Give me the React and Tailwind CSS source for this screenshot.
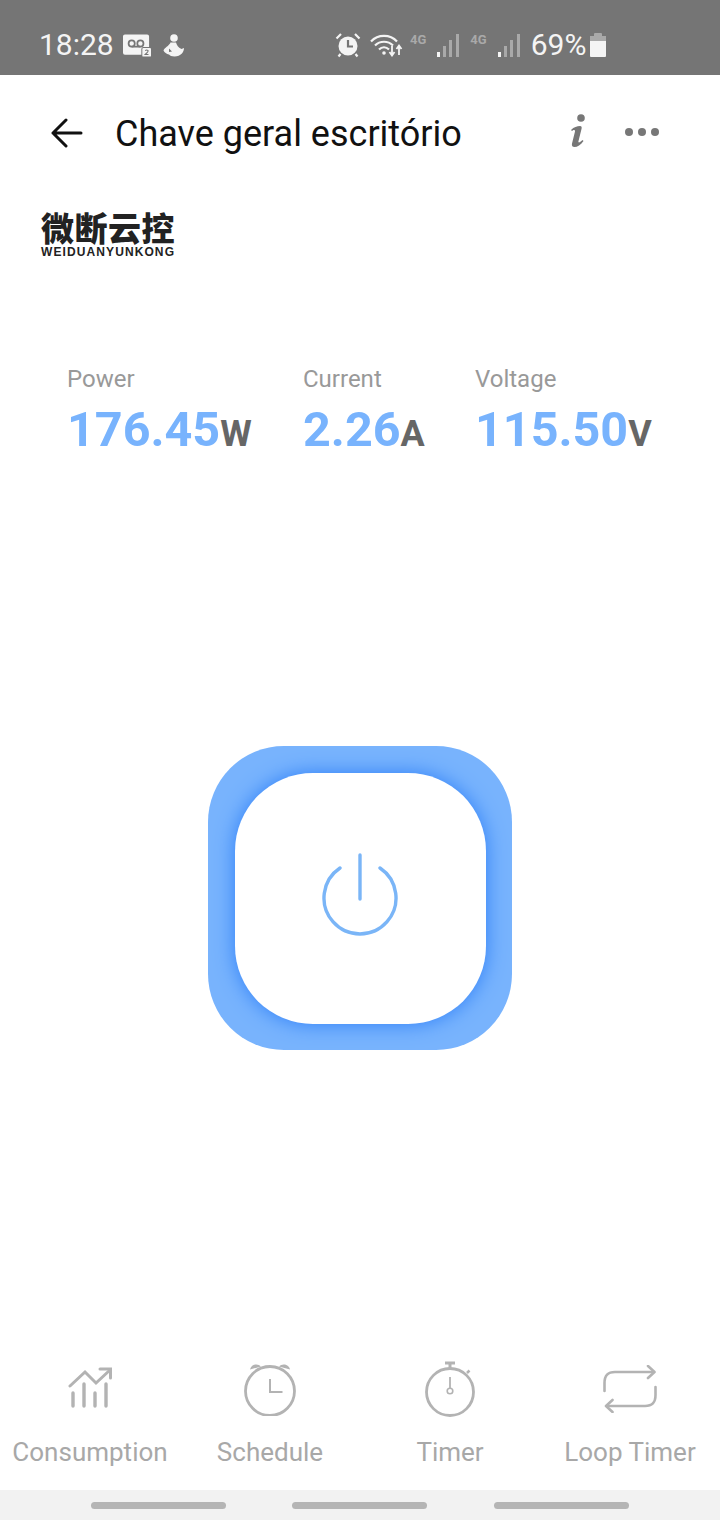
import React from 'react';

const VoicemailIcon = () => (
  <svg width="28" height="23" viewBox="0 0 29 23">
    <path d="M2 0h23a2 2 0 0 1 2 2v11h-6a2 2 0 0 0-2 2v6H2a2 2 0 0 1-2-2V2a2 2 0 0 1 2-2z" fill="#f4f4f4" />
    <circle cx="9" cy="9.500" r="3.200" fill="none" stroke="#757575" strokeWidth="1.800" />
    <circle cx="18" cy="9.500" r="3.200" fill="none" stroke="#757575" strokeWidth="1.800" />
    <path d="M9 12.700h9" stroke="#757575" strokeWidth="1.800" />
    <rect x="20" y="14" width="9" height="9" rx="1" fill="#f4f4f4" />
    <path d="M23 16.800q1.500-1.300 3 0 .3 1-3 4h3.400" fill="none" stroke="#757575" strokeWidth="1.100" />
  </svg>
);

const FigureIcon = () => (
  <svg width="22" height="23" viewBox="0 0 22 23" fill="#f4f4f4">
    <circle cx="11" cy="4" r="3.800" />
    <path d="M8 8.500h5c1 3 2 5 5.500 6.500l2.500-1c0 4-3 8.500-9.500 8.500-3 0-4.500-1-5.500-2-2.500-.5-4.500-2-5.500-4 1-3 5-4 7.500-8.500z" />
    <path d="M6 14.500l3 3-3 .5z" fill="#757575" />
  </svg>
);

const AlarmIcon = () => (
  <svg width="26" height="26" viewBox="0 0 26 26">
    <circle cx="13" cy="14" r="9.500" fill="#f4f4f4" />
    <path d="M13 8v6.500h5" fill="none" stroke="#757575" strokeWidth="2.200" />
    <path d="M1.500 6.500L6 2M24.500 6.500L20 2M5.500 22l-2 2.500M20.500 22l2 2.500" stroke="#f4f4f4" strokeWidth="2.200" />
  </svg>
);

const WifiIcon = () => (
  <svg width="33" height="24" viewBox="0 0 33 24" fill="none">
    <path d="M1 8.500C8 1 20 1 27 8.500" stroke="#f4f4f4" strokeWidth="2.200" />
    <path d="M5 12.500C10 7.500 18 7.500 23 12.500" stroke="#f4f4f4" strokeWidth="2.200" />
    <path d="M9 16.500c3-3 7-3 10 0" stroke="#f4f4f4" strokeWidth="2.200" />
    <circle cx="14" cy="20" r="1.800" fill="#f4f4f4" />
    <path d="M22 13v9M19.500 19l2.500 3.500 2.500-3.500" stroke="#f4f4f4" strokeWidth="1.800" />
    <path d="M29 22v-9M26.500 16l2.500-3.500 2.500 3.500" stroke="#f4f4f4" strokeWidth="1.800" />
  </svg>
);

const SignalIcon = () => (
  <svg width="22" height="24" viewBox="0 0 22 24">
    <rect x="0" y="19" width="3" height="5" fill="#f4f4f4" />
    <rect x="6" y="13" width="3" height="11" fill="#a9a9a9" />
    <rect x="12" y="7" width="3" height="17" fill="#a9a9a9" />
    <rect x="19" y="1" width="3" height="23" fill="#a9a9a9" />
  </svg>
);

const ConsumptionIcon = () => (
  <svg width="44" height="44" viewBox="0 0 44 44" fill="none" stroke="#b3b3b3" strokeWidth="3" strokeLinecap="round">
    <path d="M2 19L17 5l11 11L42 3" />
    <path d="M32 2h10.500v9" />
    <path d="M5 26v13M16 17v22M27 26v13M38 17v22" strokeWidth="3.400" />
  </svg>
);

const ScheduleIcon = () => (
  <svg width="54" height="54" viewBox="0 0 54 54" fill="none">
    <circle cx="27" cy="29" r="24.500" stroke="#b3b3b3" strokeWidth="2.800" />
    <path d="M7 7.500C8 2 15 1 18 4.500zM47 7.500C46 2 39 1 36 4.500z" fill="#b3b3b3" />
    <path d="M27 17v13h12.500" stroke="#b3b3b3" strokeWidth="2" />
  </svg>
);

const TimerIcon = () => (
  <svg width="52" height="56" viewBox="0 0 52 56" fill="none" stroke="#b3b3b3">
    <circle cx="26" cy="31" r="23.500" strokeWidth="2.800" />
    <path d="M21 2h10M26 2v5" strokeWidth="3" />
    <path d="M43 12l2.500-2.500" strokeWidth="2.500" />
    <path d="M26 16v11" strokeWidth="1.800" />
    <circle cx="26" cy="30" r="2.800" strokeWidth="1.600" />
  </svg>
);

const LoopIcon = () => (
  <svg width="54" height="48" viewBox="0 0 54 48" fill="none" stroke="#b3b3b3" strokeWidth="2.600" strokeLinecap="round" strokeLinejoin="round">
    <path d="M1.500 26v-8C1.500 10 5 7 12 7h38" />
    <path d="M45 1l6.500 6-6.500 6" />
    <path d="M52.500 22v8c0 8-3.500 11-10.500 11H4" />
    <path d="M9.500 35L3 41l6.500 6" />
  </svg>
);

const PowerIcon = () => (
  <svg width="76" height="84" viewBox="0 0 76 84" fill="none" stroke="#7ab5f7" strokeWidth="3.400" strokeLinecap="round" className="mb-[6px]">
    <path d="M38 2v44" />
    <path d="M18 15a36 36 0 1 0 40 0" />
  </svg>
);

const tabs = [
  { label: 'Consumption', icon: <ConsumptionIcon /> },
  { label: 'Schedule', icon: <ScheduleIcon /> },
  { label: 'Timer', icon: <TimerIcon /> },
  { label: 'Loop Timer', icon: <LoopIcon /> },
];

const stats = [
  { label: 'Power', value: '176.45', unit: 'W', width: 'w-[236px]' },
  { label: 'Current', value: '2.26', unit: 'A', width: 'w-[172px]' },
  { label: 'Voltage', value: '115.50', unit: 'V', width: 'w-[200px]' },
];

export default function App() {
  return (
    <div className="w-[720px] h-[1520px] flex flex-col bg-white overflow-hidden font-['Roboto',sans-serif]">
      {/* status bar */}
      <div className="h-[75px] shrink-0 bg-[#757575] flex items-center pl-[39px] pt-[15px] text-[#f4f4f4]">
        <span className="text-[30px] leading-none w-[84px]">18:28</span>
        <VoicemailIcon />
        <span className="ml-[12px] flex"><FigureIcon /></span>
        <span className="ml-[150px] flex"><AlarmIcon /></span>
        <span className="ml-[9px] flex"><WifiIcon /></span>
        <span className="ml-[7px] mb-3 text-[13px] font-bold text-[#a9a9a9] leading-none">4G</span>
        <span className="ml-[11px] flex"><SignalIcon /></span>
        <span className="ml-[11px] mb-3 text-[13px] font-bold text-[#a9a9a9] leading-none">4G</span>
        <span className="ml-[11px] flex"><SignalIcon /></span>
        <span className="ml-[11px] text-[30px] leading-none">69%</span>
        <div className="ml-[4px] w-[16px] h-[24px] flex flex-col items-center">
          <div className="w-[8px] h-[3px] bg-[#a9a9a9] rounded-t-[1px]" />
          <div className="w-[16px] h-[5px] bg-[#a9a9a9]" />
          <div className="w-[16px] h-[16px] bg-[#f4f4f4] rounded-b-[1px]" />
        </div>
      </div>

      {/* header */}
      <div className="h-[116px] shrink-0 flex items-center pl-[51px] pr-[61px]">
        <svg width="32" height="30" viewBox="0 0 32 30" fill="none" stroke="#111" strokeWidth="3" strokeLinecap="round" strokeLinejoin="round">
          <path d="M30 15H2M15 2L2 15l13 13" />
        </svg>
        <h1 className="ml-[32px] pt-[2px] text-[36px] leading-none text-[#111] flex-1">Chave geral escritório</h1>
        <svg width="18" height="36" viewBox="0 0 18 36" fill="#777" className="mr-[37px] mb-[2px]">
          <circle cx="11" cy="4" r="3.800" />
          <path d="M1 16c3-3 6-4 9-4 1.500 0 2 1 1.500 3l-3 12c-.5 2 1 2 4-1l1 1c-3 4-6 6-9 6-2 0-3-1-2.500-3.500l3-12C5 15 3 16 2 17z" />
        </svg>
        <div className="flex gap-[5px] mb-[2px]">
          <span className="w-[8px] h-[8px] rounded-full bg-[#777]" />
          <span className="w-[8px] h-[8px] rounded-full bg-[#777]" />
          <span className="w-[8px] h-[8px] rounded-full bg-[#777]" />
        </div>
      </div>

      {/* logo */}
      <div className="pl-[41px] pt-[19px] h-[70px] shrink-0 text-[#222]">
        <div className="text-[33px] leading-[34px] font-black tracking-[0.5px] font-['Noto_Sans_CJK_SC',sans-serif]">微断云控</div>
        <div className="mt-[3px] text-[12px] leading-[11px] font-bold tracking-[1.100px] whitespace-nowrap font-['Liberation_Sans',sans-serif]">WEIDUANYUNKONG</div>
      </div>

      {/* readings */}
      <div className="mt-[104px] pl-[67px] flex shrink-0">
        {stats.map(s => (
          <div key={s.label} className={s.width}>
            <div className="text-[24px] leading-[28px] text-[#999999]">{s.label}</div>
            <div className="mt-[12px] h-[50px] leading-[50px] font-bold whitespace-nowrap">
              <span className="text-[48.500px] text-[#78b3fd]">{s.value}</span>
              <span className="text-[36px] text-[#666666]">{s.unit}</span>
            </div>
          </div>
        ))}
      </div>

      {/* power button */}
      <div className="mt-[291px] flex justify-center shrink-0">
        <div className="w-[304px] h-[304px] rounded-[76px] bg-[#78b3fd] flex items-center justify-center">
          <div className="w-[251px] h-[251px] rounded-[78px] bg-white shadow-[0_0_20px_#2f80f8] flex items-center justify-center">
            <PowerIcon />
          </div>
        </div>
      </div>

      {/* bottom tabs */}
      <div className="mt-auto grid grid-cols-4 shrink-0">
        {tabs.map(t => (
          <div key={t.label} className="flex flex-col items-center">
            <div className="h-[62px] flex items-center justify-center">{t.icon}</div>
            <span className="mt-[17px] text-[26px] leading-[30px] text-[#a8a8a8] whitespace-nowrap">{t.label}</span>
          </div>
        ))}
      </div>

      {/* nav bar */}
      <div className="mt-[23px] h-[30px] shrink-0 bg-[#f2f2f2] flex items-center pl-[91px] gap-[66px]">
        <div className="w-[135px] h-[7px] rounded-full bg-[#b5b5b5]" />
        <div className="w-[135px] h-[7px] rounded-full bg-[#b5b5b5]" />
        <div className="ml-[1px] w-[135px] h-[7px] rounded-full bg-[#b5b5b5]" />
      </div>
    </div>
  );
}
